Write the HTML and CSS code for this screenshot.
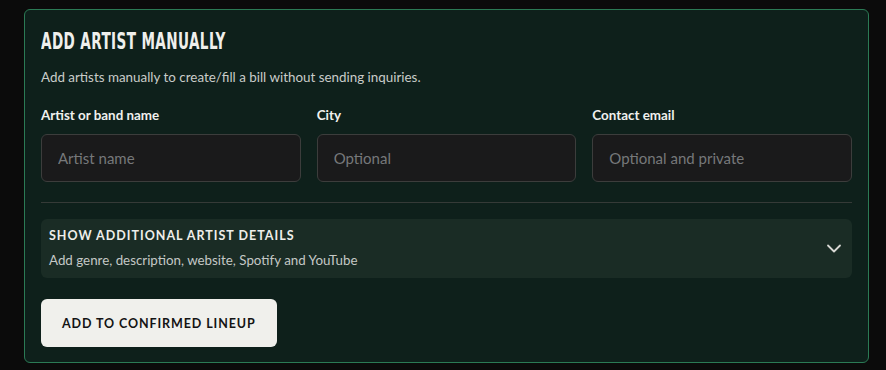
FILE: index.html
```html
<!DOCTYPE html>
<html lang="en">
<head>
<meta charset="utf-8">
<title>Add artist manually</title>
<link rel="stylesheet" href="styles.css">
</head>
<body>
<div class="page">
  <section class="card">
    <h2 class="title"><span class="title-text">ADD ARTIST MANUALLY</span></h2>
    <p class="desc">Add artists manually to create/fill a bill without sending inquiries.</p>
    <div class="fields">
      <label class="field">
        <span class="label">Artist or band name</span>
        <input class="input" type="text" placeholder="Artist name">
      </label>
      <label class="field">
        <span class="label">City</span>
        <input class="input" type="text" placeholder="Optional">
      </label>
      <label class="field">
        <span class="label">Contact email</span>
        <input class="input" type="email" placeholder="Optional and private">
      </label>
    </div>
    <hr class="divider">
    <div class="details">
      <div class="details-text">
        <div class="details-title">SHOW ADDITIONAL ARTIST DETAILS</div>
        <div class="details-sub">Add genre, description, website, Spotify and YouTube</div>
      </div>
      <svg class="chev" width="16" height="10" viewBox="0 0 16 10"><path d="M2 2.5 L8 8.5 L14 2.5" fill="none" stroke="#d8d8d4" stroke-width="1.8" stroke-linecap="round" stroke-linejoin="round"/></svg>
    </div>
    <button class="btn" type="button">ADD TO CONFIRMED LINEUP</button>
  </section>
</div>
</body>
</html>
```
FILE: styles.css
```css
html, body {
  margin: 0;
  padding: 0;
  background: #0b0b0b;
}
body {
  font-family: "Lato", "Noto Sans", sans-serif;
  color: #ebebe8;
}
.page {
  padding: 9px 17px 0 24px;
}
.card {
  background: #0e201b;
  border: 1px solid #2b7a55;
  border-radius: 6px;
  padding: 17px 16px 15px 16px;
}
.title {
  margin: 0;
  font-family: "DejaVu Sans Condensed", "Liberation Sans", sans-serif;
  font-weight: 700;
  font-size: 22.5px;
  line-height: 28px;
  color: #efefec;
  white-space: nowrap;
}
.title-text {
  display: inline-block;
  transform: scaleX(0.67);
  transform-origin: left center;
  letter-spacing: 0.6px;
}
.desc {
  margin: 12px 0 0;
  font-size: 13.4px;
  line-height: 20px;
  color: #c9ccc9;
}
.fields {
  margin-top: 18px;
  display: grid;
  grid-template-columns: 1fr 1fr 1fr;
  gap: 16px;
}
.field {
  display: flex;
  flex-direction: column;
  gap: 9px;
}
.label {
  font-size: 13.4px;
  line-height: 20px;
  font-weight: 700;
  color: #f0f0ee;
}
.input {
  box-sizing: border-box;
  height: 48px;
  width: 100%;
  background: #1a1a1b;
  border: 1px solid #3c3d3c;
  border-radius: 6px;
  padding: 0 16px;
  font-family: inherit;
  font-size: 15px;
  color: #ebebe8;
  outline: none;
}
.input::placeholder {
  color: #76787a;
}
.divider {
  margin: 20px 0 0;
  border: 0;
  height: 1px;
  background: #353a37;
}
.details {
  margin-top: 16px;
  background: #1a2c25;
  border-radius: 6px;
  padding: 7px 10px 8px 8px;
  display: flex;
  align-items: center;
  justify-content: space-between;
}
.details-text {
  display: flex;
  flex-direction: column;
  gap: 4px;
}
.details-title {
  font-size: 12.5px;
  line-height: 20px;
  font-weight: 700;
  letter-spacing: 1px;
  color: #eeeeea;
}
.details-sub {
  font-size: 13.35px;
  line-height: 20px;
  color: #c4c8c5;
}
.chev {
  display: block;
}
.btn {
  margin-top: 21px;
  height: 48px;
  padding: 0 21px;
  background: #f0f0ec;
  border: 0;
  border-radius: 6px;
  font-family: inherit;
  font-size: 12.5px;
  font-weight: 700;
  letter-spacing: 0.9px;
  color: #141414;
  cursor: pointer;
}
```
